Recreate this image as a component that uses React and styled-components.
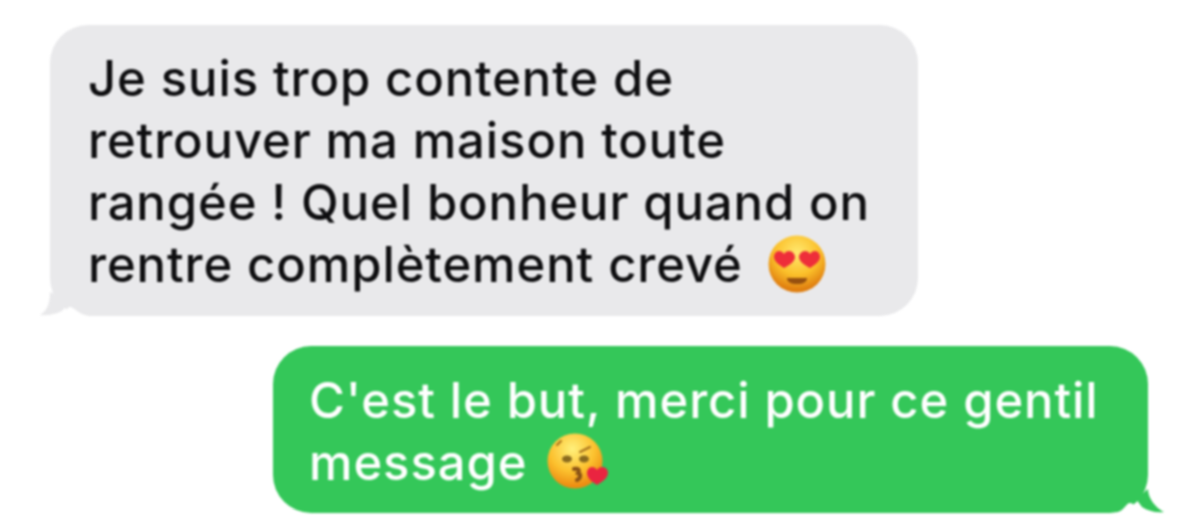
import React from 'react';
import styled, { createGlobalStyle } from 'styled-components';

const GlobalStyle = createGlobalStyle`
  html, body {
    margin: 0;
    padding: 0;
    background: #ffffff;
  }
`;

// heart eyes emoji in the grey bubble
function HeartEyes() {
  return (
    <Emoji viewBox="0 0 60 60" $size={60} $gap={10}>
      <defs>
        <radialGradient id="faceA" cx="50%" cy="30%" r="65%">
          <stop offset="0%" stopColor="#ffe970" />
          <stop offset="60%" stopColor="#fbc02a" />
          <stop offset="100%" stopColor="#e07f10" />
        </radialGradient>
      </defs>
      <circle cx="30" cy="30" r="28.5" fill="url(#faceA)" />
      <path d="M17 34c-5-3-10-7-10-11 0-3 2-6 5-6 2 0 4 1 5 3 1-2 3-3 5-3 3 0 6 3 6 6 0 4-5 8-11 11z" fill="#ee2e3a" />
      <path d="M43 34c-6-3-11-7-11-11 0-3 3-6 6-6 2 0 4 1 5 3 1-2 3-3 5-3 3 0 5 3 5 6 0 4-5 8-10 11z" fill="#ee2e3a" />
      <path d="M20 44h20c0 4-4 6-10 6s-10-2-10-6z" fill="#96500f" />
    </Emoji>
  );
}

// kiss emoji in the green bubble
function KissHeart() {
  return (
    <Emoji viewBox="0 0 62 60" $size={62} $gap={6}>
      <defs>
        <radialGradient id="faceB" cx="45%" cy="28%" r="68%">
          <stop offset="0%" stopColor="#fff07c" />
          <stop offset="60%" stopColor="#fcc12e" />
          <stop offset="100%" stopColor="#ec8d12" />
        </radialGradient>
      </defs>
      <circle cx="28" cy="29" r="27.5" fill="url(#faceB)" />
      <ellipse cx="20" cy="27" rx="5" ry="3.5" fill="#8a6a1e" />
      <ellipse cx="37" cy="27" rx="5" ry="3.5" fill="#8a6a1e" />
      <path d="M33 20l10-5M10 13l4-4" stroke="#a5701c" strokeWidth="2" fill="none" strokeLinecap="round" />
      <path d="M27 37c4-1 6 1 4 4 3 1 3 5-1 7" stroke="#8a5216" strokeWidth="4" fill="none" strokeLinecap="round" />
      <path d="M50 53c-5-3-10-7-10-12 0-3 2-6 5-6 2 0 4 1 5 3 1-2 3-3 5-3 4 0 6 3 6 6 0 5-6 9-11 12z" fill="#ea2440" />
    </Emoji>
  );
}

export default function App() {
  return (
    <>
      <GlobalStyle />
      <Thread>
        <Bubble $incoming>
          Je suis trop contente de
          <br />
          retrouver ma maison toute
          <br />
          rangée ! Quel bonheur quand on
          <br />
          rentre complètement crevé <HeartEyes />
          <Tail viewBox="0 0 60 24" $incoming>
            <path d="M16 24C28 22 26 15 30 15 34 15 38 22 48 24z" fill="#ffffff" />
            <path d="M10 0C10 10 8 18 0 23 8 24 16 22 22 19L30 10z" fill="#e9e9eb" />
          </Tail>
        </Bubble>
        <Bubble>
          C'est le but, merci pour ce gentil
          <br />
          message <KissHeart />
          <Tail viewBox="0 0 60 24">
            <path d="M10 24C18 22 20 14 24 14 28 14 32 22 44 24z" fill="#ffffff" />
            <path d="M42 0C42 10 50 19 58 23 50 24 42 22 36 18L30 10z" fill="#34c759" />
          </Tail>
        </Bubble>
      </Thread>
    </>
  );
}

const Thread = styled.div`
  width: 1200px;
  height: 524px;
  box-sizing: border-box;
  overflow: hidden;
  padding: 25px 52px 0 50px;
  display: flex;
  flex-direction: column;
  gap: 30px;
  filter: blur(1px);
`;

const Bubble = styled.div`
  position: relative;
  box-sizing: border-box;
  width: ${(p) => (p.$incoming ? '868px' : '875px')};
  align-self: ${(p) => (p.$incoming ? 'flex-start' : 'flex-end')};
  padding: ${(p) => (p.$incoming ? '23px 20px 20px 38px' : '24px 20px 19px 36px')};
  border-radius: 38px;
  background: ${(p) => (p.$incoming ? '#e9e9eb' : '#34c759')};
  color: ${(p) => (p.$incoming ? '#0e0e10' : '#ffffff')};
  font-family: Inter, "Liberation Sans", Arial, sans-serif;
  font-size: 49px;
  font-weight: 500;
  letter-spacing: 0.9px;
  line-height: 62px;
  white-space: nowrap;
`;

const Tail = styled.svg`
  position: absolute;
  bottom: 0;
  width: 60px;
  height: 24px;
  ${(p) => (p.$incoming ? 'left: -10px;' : 'right: -18px;')}
`;

const Emoji = styled.svg`
  display: inline-block;
  width: ${(p) => p.$size}px;
  height: 60px;
  margin-left: ${(p) => p.$gap}px;
  vertical-align: -12px;
`;
